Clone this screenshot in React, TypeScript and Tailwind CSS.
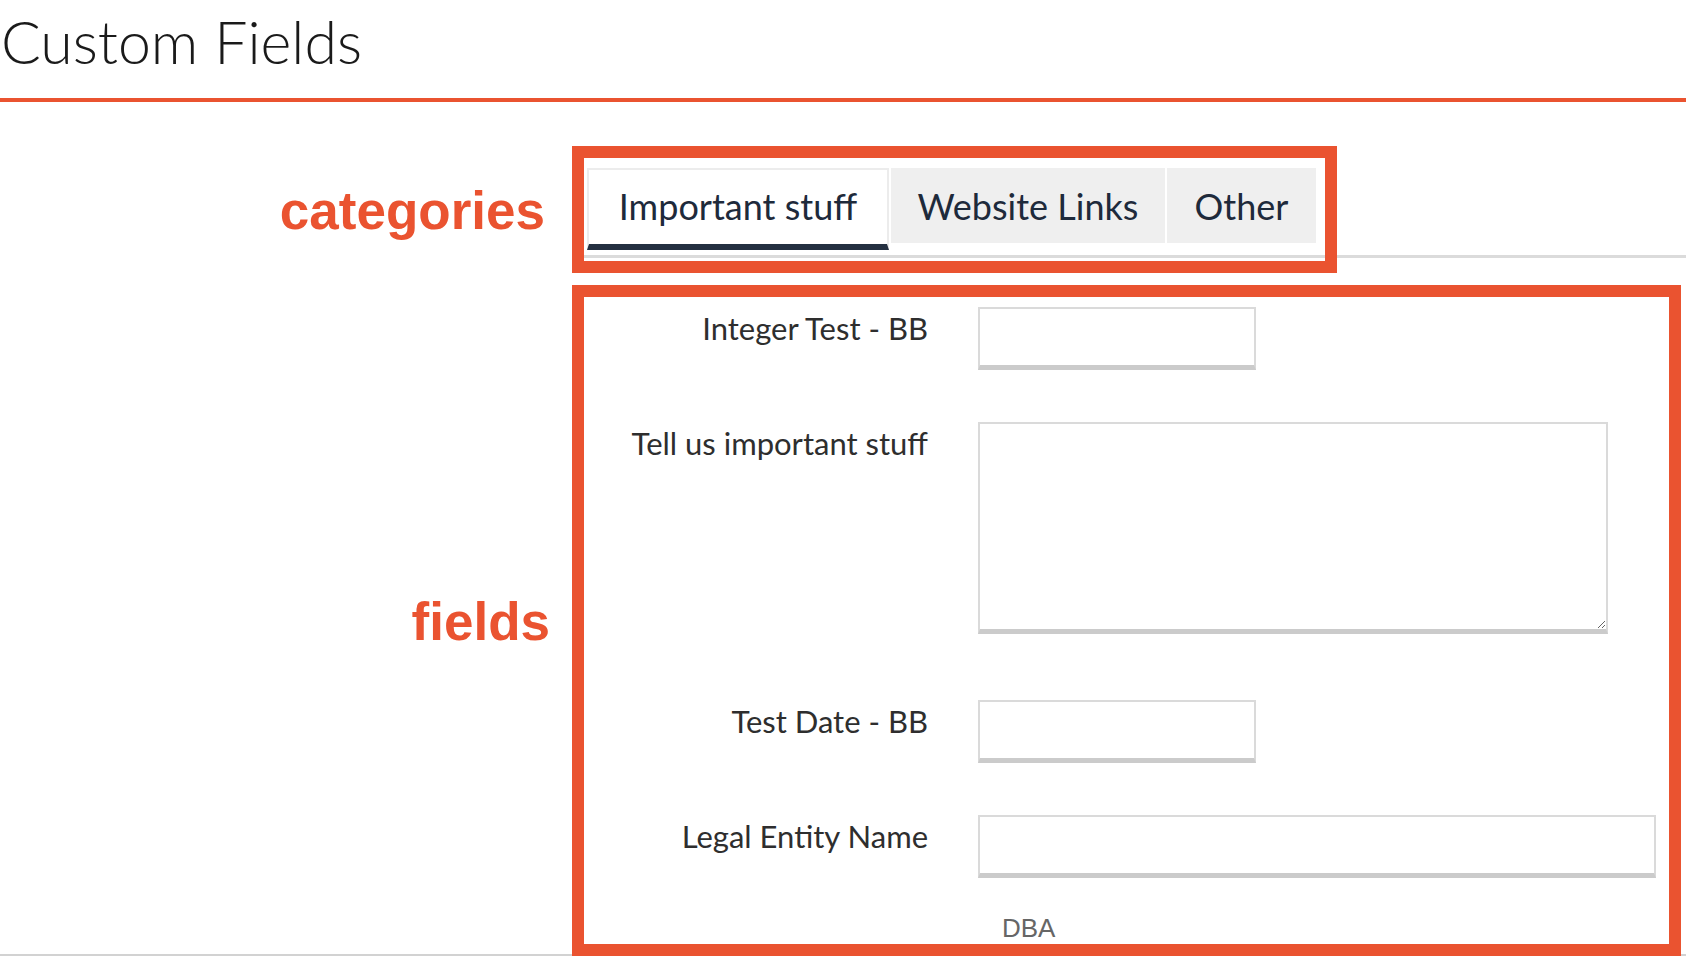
import { useState } from "react";

const tabs = [
    { name: "Important stuff", width: "w-[302px]" },
    { name: "Website Links", width: "w-[274px]" },
    { name: "Other", width: "w-[149px]" },
];

function Field({ label, children, className }: { label: string, children: React.ReactNode, className?: string }) {
    return (
        <div className={`flex items-start gap-[50px] ${className ?? ""}`}>
            <label className="w-[356px] shrink-0 text-right pt-[6px] text-[31px] leading-none text-[#2e2e2e]">
                {label}
            </label>
            {children}
        </div>
    );
}

const inputCls = "block h-[63px] bg-white border-2 border-[#dadada] border-b-[5px] border-b-[#cbcbcb] outline-none";

export default function App() {
    const [active, setActive] = useState(0);

    return (
        <div className="relative w-[1686px] h-[958px] bg-white overflow-hidden font-['Lato',sans-serif]">
            <header className="h-[102px] border-b-4 border-[#ea5330] pt-[12px]">
                <h1 className="text-[59px] leading-none font-light text-[#1a1a1a] pl-[1px]">Custom Fields</h1>
            </header>

            <div className="flex h-[854px] border-b-2 border-[#d2d2d2]">
                {/* annotation labels */}
                <div className="w-[572px] shrink-0 pr-[22px] flex flex-col items-end font-['Liberation_Sans',Arial,sans-serif] font-bold text-[53px] leading-none text-[#ea5330]">
                    <p className="mt-[82px] mr-[5px]">categories</p>
                    <p className="mt-[358px]">fields</p>
                </div>

                <div className="flex-1">
                    <div className="mt-[66px] pl-[15px] pb-[5px] border-b-[3px] border-[#dbdbdb] flex items-start gap-[2px]">
                        {tabs.map((t, i) => (
                            <button
                                key={t.name}
                                onClick={() => setActive(i)}
                                className={`${t.width} ${i === active
                                    ? "h-[82px] bg-white border-2 border-[#ececec] border-b-[6px] border-b-[#243041] pb-[2px]"
                                    : "h-[75px] bg-[#efefef]"} text-center text-[36px] leading-none text-[#1e2a3b]`}
                            >
                                {t.name}
                            </button>
                        ))}
                    </div>

                    <div className="flex flex-col">
                        <Field label="Integer Test - BB" className="mt-[49px]">
                            <input className={`${inputCls} w-[278px]`} />
                        </Field>
                        <Field label="Tell us important stuff" className="mt-[52px]">
                            <textarea className="block w-[630px] h-[212px] bg-white border-2 border-[#dadada] border-b-[5px] border-b-[#cbcbcb] outline-none resize" />
                        </Field>
                        <Field label="Test Date - BB" className="mt-[66px]">
                            <input className={`${inputCls} w-[278px]`} />
                        </Field>
                        <Field label="Legal Entity Name" className="mt-[52px]">
                            <input className={`${inputCls} w-[678px]`} />
                        </Field>
                        <p className="mt-[37px] ml-[430px] font-['Liberation_Sans',Arial,sans-serif] text-[26px] leading-none text-[#666]">DBA</p>
                    </div>
                </div>
            </div>

            {/* annotation boxes drawn over the screenshot */}
            <div className="absolute left-[572px] top-[146px] w-[765px] h-[127px] border-[12px] border-[#ea5330] pointer-events-none" />
            <div className="absolute left-[572px] top-[285px] w-[1109px] h-[671px] border-[12px] border-[#ea5330] pointer-events-none" />
        </div>
    );
}
